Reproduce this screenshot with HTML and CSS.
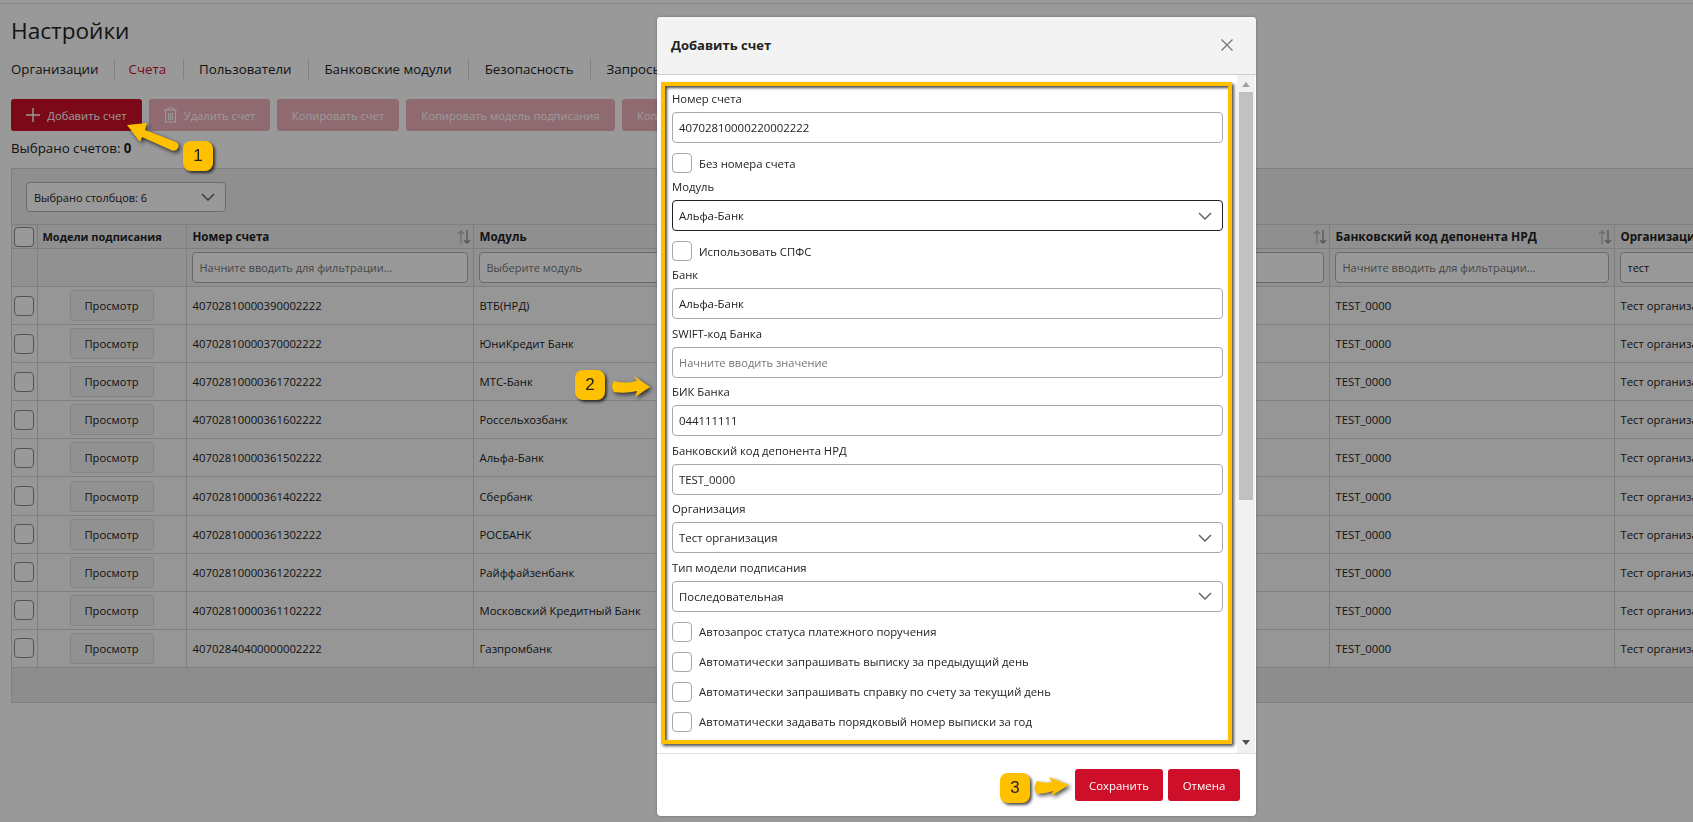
FILE: index.html
```html
<!DOCTYPE html>
<html lang="ru">

<head>
  <meta charset="UTF-8">
  <meta name="viewport" content="width=device-width, initial-scale=1.0">
  <title>Настройки</title>

  <link rel="stylesheet" href="styles.css">
</head>

<body>
  <svg class="defs" width="0" height="0">
    <symbol id="sort" viewBox="0 0 14 14">
      <path d="M4 14V1M1 4l3-3 3 3" fill="none" stroke="#b5b5b5" stroke-width="1.3" />
      <path d="M10 0v13M7 10l3 3 3-3" fill="none" stroke="#8c8c8c" stroke-width="1.3" />
    </symbol>
    <symbol id="chevron" viewBox="0 0 14 8">
      <path d="M1 1l6 6 6-6" fill="none" stroke="currentColor" stroke-width="1.5" />
    </symbol>
  </svg>

  <div class="top-line"></div>

  <main class="page">
    <h1 class="title">Настройки</h1>

    <nav class="tabs">
      <a class="tab">Организации</a>
      <a class="tab tab-active">Счета</a>
      <a class="tab">Пользователи</a>
      <a class="tab">Банковские модули</a>
      <a class="tab">Безопасность</a>
      <a class="tab">Запросы</a>
    </nav>

    <div class="actions">
      <button class="btn btn-add">
        <svg width="14" height="14" viewBox="0 0 14 14">
          <path d="M7 0v14M0 7h14" fill="none" stroke="#fff" stroke-width="1.4" />
        </svg>
        Добавить счет
      </button>
      <button class="btn btn-off btn-delete">
        <svg width="13" height="16" viewBox="0 0 13 16">
          <path d="M0 3h13M4 3V1h5v2M1.5 3v12h10V3M4.5 6v7M6.5 6v7M8.5 6v7" fill="none" stroke="#fff" stroke-width="1.1" />
        </svg>
        Удалить счет
      </button>
      <button class="btn btn-off btn-copy">Копировать счет</button>
      <button class="btn btn-off btn-copy-model">Копировать модель подписания</button>
      <button class="btn btn-off btn-more">Копировать</button>
    </div>

    <p class="selected">Выбрано счетов: <b>0</b></p>

    <section class="panel">
      <div class="panel-top">
        <div class="select select-columns">
          <span>Выбрано столбцов: 6</span>
          <svg class="chev"><use href="#chevron" /></svg>
        </div>
      </div>

      <table class="grid">
        <colgroup>
          <col class="col-check">
          <col class="col-models">
          <col class="col-number">
          <col class="col-module">
          <col class="col-bank">
          <col class="col-code">
          <col class="col-org">
        </colgroup>
        <thead>
          <tr class="head-row">
            <th><span class="check"></span></th>
            <th class="th-narrow">Модели подписания</th>
            <th>Номер счета<svg class="sort"><use href="#sort" /></svg></th>
            <th>Модуль</th>
            <th>Банк<svg class="sort"><use href="#sort" /></svg></th>
            <th class="th-wide">Банковский код депонента НРД<svg class="sort"><use href="#sort" /></svg></th>
            <th>Организация</th>
          </tr>
          <tr class="filter-row">
            <td></td>
            <td></td>
            <td><input class="filter" placeholder="Начните вводить для фильтрации..."></td>
            <td><input class="filter" placeholder="Выберите модуль"></td>
            <td><input class="filter" placeholder="Начните вводить для фильтрации..."></td>
            <td><input class="filter" placeholder="Начните вводить для фильтрации..."></td>
            <td><input class="filter" value="тест"></td>
          </tr>
        </thead>
        <tbody>
          <tr>
            <td><span class="check"></span></td>
            <td><button class="view">Просмотр</button></td>
            <td>40702810000390002222</td>
            <td>ВТБ(НРД)</td>
            <td></td>
            <td>TEST_0000</td>
            <td>Тест организация</td>
          </tr>
          <tr>
            <td><span class="check"></span></td>
            <td><button class="view">Просмотр</button></td>
            <td>40702810000370002222</td>
            <td>ЮниКредит Банк</td>
            <td></td>
            <td>TEST_0000</td>
            <td>Тест организация</td>
          </tr>
          <tr>
            <td><span class="check"></span></td>
            <td><button class="view">Просмотр</button></td>
            <td>40702810000361702222</td>
            <td>МТС-Банк</td>
            <td></td>
            <td>TEST_0000</td>
            <td>Тест организация</td>
          </tr>
          <tr>
            <td><span class="check"></span></td>
            <td><button class="view">Просмотр</button></td>
            <td>40702810000361602222</td>
            <td>Россельхозбанк</td>
            <td></td>
            <td>TEST_0000</td>
            <td>Тест организация</td>
          </tr>
          <tr>
            <td><span class="check"></span></td>
            <td><button class="view">Просмотр</button></td>
            <td>40702810000361502222</td>
            <td>Альфа-Банк</td>
            <td></td>
            <td>TEST_0000</td>
            <td>Тест организация</td>
          </tr>
          <tr>
            <td><span class="check"></span></td>
            <td><button class="view">Просмотр</button></td>
            <td>40702810000361402222</td>
            <td>Сбербанк</td>
            <td></td>
            <td>TEST_0000</td>
            <td>Тест организация</td>
          </tr>
          <tr>
            <td><span class="check"></span></td>
            <td><button class="view">Просмотр</button></td>
            <td>40702810000361302222</td>
            <td>РОСБАНК</td>
            <td></td>
            <td>TEST_0000</td>
            <td>Тест организация</td>
          </tr>
          <tr>
            <td><span class="check"></span></td>
            <td><button class="view">Просмотр</button></td>
            <td>40702810000361202222</td>
            <td>Райффайзенбанк</td>
            <td></td>
            <td>TEST_0000</td>
            <td>Тест организация</td>
          </tr>
          <tr>
            <td><span class="check"></span></td>
            <td><button class="view">Просмотр</button></td>
            <td>40702810000361102222</td>
            <td>Московский Кредитный Банк</td>
            <td></td>
            <td>TEST_0000</td>
            <td>Тест организация</td>
          </tr>
          <tr>
            <td><span class="check"></span></td>
            <td><button class="view">Просмотр</button></td>
            <td>40702840400000002222</td>
            <td>Газпромбанк</td>
            <td></td>
            <td>TEST_0000</td>
            <td>Тест организация</td>
          </tr>
        </tbody>
      </table>
      <div class="panel-bottom"></div>
    </section>
  </main>

  <div class="backdrop"></div>

  <div class="modal">
    <header class="modal-head">
      <h2 class="modal-title">Добавить счет</h2>
      <svg class="modal-close" width="12" height="12" viewBox="0 0 12 12">
        <path d="M0.5 0.5l11 11M11.5 0.5l-11 11" fill="none" stroke="#7a7a7a" stroke-width="1.4" />
      </svg>
    </header>

    <div class="modal-body">
      <form class="form">
        <label class="field-label">Номер счета</label>
        <input class="field-input" value="40702810000220002222">

        <div class="check-row check-row-first"><span class="check"></span>Без номера счета</div>

        <label class="field-label">Модуль</label>
        <div class="select select-field select-focus">
          <span>Альфа-Банк</span>
          <svg class="chev"><use href="#chevron" /></svg>
        </div>

        <div class="check-row check-row-first"><span class="check"></span>Использовать СПФС</div>

        <label class="field-label">Банк</label>
        <input class="field-input" value="Альфа-Банк">

        <label class="field-label field-label-next">SWIFT-код Банка</label>
        <input class="field-input" placeholder="Начните вводить значение">

        <label class="field-label field-label-next">БИК Банка</label>
        <input class="field-input" value="044111111">

        <label class="field-label field-label-next">Банковский код депонента НРД</label>
        <input class="field-input" value="TEST_0000">

        <label class="field-label field-label-next">Организация</label>
        <div class="select select-field">
          <span>Тест организация</span>
          <svg class="chev"><use href="#chevron" /></svg>
        </div>

        <label class="field-label field-label-next">Тип модели подписания</label>
        <div class="select select-field">
          <span>Последовательная</span>
          <svg class="chev"><use href="#chevron" /></svg>
        </div>

        <div class="check-row check-row-first"><span class="check"></span>Автозапрос статуса платежного поручения</div>
        <div class="check-row"><span class="check"></span>Автоматически запрашивать выписку за предыдущий день</div>
        <div class="check-row"><span class="check"></span>Автоматически запрашивать справку по счету за текущий день</div>
        <div class="check-row"><span class="check"></span>Автоматически задавать порядковый номер выписки за год</div>
      </form>

      <div class="scrollbar">
        <span class="scroll-up"></span>
        <span class="scroll-thumb"></span>
        <span class="scroll-down"></span>
      </div>
    </div>

    <footer class="modal-foot">
      <button class="btn btn-save">Сохранить</button>
      <button class="btn btn-cancel">Отмена</button>
    </footer>
  </div>

  <!-- annotations on top of the screenshot -->
  <div class="highlight"></div>

  <svg class="arrows" width="1693" height="822" viewBox="0 0 1693 822">
    <path d="M127 125L147 123L145 130L176 142Q180 145 178 148Q176 152 171 150L142 137L140 142Z" />
    <path d="M614 381Q625 384 637 381L634 376L650 387L635 397L637 391Q625 394 614 392Q610 386 614 381Z" />
    <path d="M1037 781Q1045 784 1052 782L1049 777L1069 785L1051 796L1053 791Q1045 794 1037 794Q1032 788 1037 781Z" />
  </svg>

  <div class="badge badge-one">1</div>
  <div class="badge badge-two">2</div>
  <div class="badge badge-three">3</div>
</body>

</html>
```

FILE: styles.css
```css
* {
  box-sizing: border-box;
}

body {
  margin: 0;
  width: 1693px;
  height: 822px;
  overflow: hidden;
  background: #fff;
  color: #222;
  font-family: "Open Sans", "Noto Sans", sans-serif;
  font-size: 12px;
}

.defs {
  display: block;
}

.top-line {
  height: 4px;
  border-bottom: 1px solid #e6e6e6;
}

.page {
  padding-left: 11px;
}

.title {
  margin: 0;
  height: 47px;
  padding-top: 9px;
  font-size: 22.6px;
  font-weight: 400;
  line-height: 36px;
}

.tabs {
  display: flex;
  align-items: center;
  height: 20px;
  margin-top: 8px;
  font-size: 13.3px;
}

.tab {
  padding: 0 16.5px 0 15.5px;
  border-right: 1px solid #d8d8d8;
  line-height: 20px;
  white-space: nowrap;
}

.tab:first-child {
  padding: 0 15px 0 0;
}

.tab-active {
  padding-left: 14px;
  color: #c8102e;
}

.actions {
  display: flex;
  gap: 7px;
  margin-top: 20px;
  height: 32px;
}

.btn {
  display: flex;
  align-items: center;
  justify-content: center;
  gap: 7px;
  height: 32px;
  padding: 0;
  border: 0;
  border-radius: 3px;
  background: #ce0f29;
  color: #fff;
  font-family: inherit;
  font-size: 11.2px;
}

.btn-add {
  width: 131px;
}

.btn-off {
  background: #efb3bc;
  color: #fff;
}

.btn-delete {
  width: 121px;
}

.btn-copy {
  width: 122px;
}

.btn-copy-model {
  width: 209px;
}

.btn-more {
  justify-content: flex-start;
  width: 122px;
  padding-left: 15px;
}

.selected {
  margin: 8px 0 0;
  height: 29px;
  font-size: 13.3px;
  line-height: 18px;
}

.panel {
  width: 1800px;
  border: 1px solid #d4d4d4;
  background: #efefef;
}

.panel-top {
  height: 55px;
  padding: 13px 14px 0;
}

.select {
  display: flex;
  align-items: center;
  justify-content: space-between;
  background: #fff;
  border: 1px solid #b4b4b4;
  border-radius: 4px;
}

.select-columns {
  width: 200px;
  height: 30px;
  padding: 0 10px 0 7px;
  font-size: 11px;
}

.chev {
  width: 14px;
  height: 8px;
  color: #666;
}

.grid {
  width: 1798px;
  border-collapse: collapse;
  table-layout: fixed;
  font-size: 11.3px;
}

.col-check {
  width: 25px;
}

.col-models {
  width: 149px;
}

.col-number {
  width: 287px;
}

.col-module {
  width: 327px;
}

.col-bank {
  width: 529px;
}

.col-code {
  width: 285px;
}

.grid th,
.grid td {
  border: 1px solid #d4d4d4;
  padding: 0 6px;
  overflow: hidden;
  white-space: nowrap;
  text-align: left;
}

.grid tr > :first-child {
  border-left: 0;
  padding: 0 0 0 2px;
}

.head-row th {
  position: relative;
  height: 24px;
  background: #efefef;
  font-size: 11.6px;
  font-weight: 700;
}

.head-row .th-narrow {
  padding-left: 5px;
  font-size: 11px;
}

.head-row .th-wide {
  font-size: 12px;
}

.filter-row td {
  height: 38px;
  padding: 0 5px;
  background: #f2f2f2;
}

.grid tbody td {
  height: 38.1px;
  background: #fbfbfb;
}

.sort {
  position: absolute;
  top: 5px;
  right: 2px;
  width: 14px;
  height: 14px;
}

.check {
  display: block;
  flex: none;
  width: 20px;
  height: 20px;
  background: #fff;
  border: 1px solid #a8a8a8;
  border-radius: 4px;
}

.grid .check {
  border-color: #8c8c8c;
}

.filter {
  display: block;
  width: 100%;
  height: 31px;
  padding: 0 7px;
  background: #fff;
  border: 1px solid #b0b0b0;
  border-radius: 4px;
  font-family: inherit;
  font-size: 11px;
  color: #222;
}

.filter::placeholder,
.field-input::placeholder {
  color: #757575;
  opacity: 1;
}

.field-input::placeholder {
  font-size: 11.1px;
}

.view {
  display: block;
  width: 84px;
  height: 31px;
  margin: 0 auto;
  padding: 0;
  background: #f2f2f2;
  border: 1px solid #ddd;
  border-radius: 3px;
  font-family: inherit;
  font-size: 11.2px;
  color: #222;
}

.panel-bottom {
  height: 34px;
  background: #ececec;
}

.backdrop {
  position: fixed;
  inset: 0;
  background: rgba(0, 0, 0, 0.4);
}

.modal {
  position: fixed;
  left: 657px;
  top: 17px;
  display: flex;
  flex-direction: column;
  width: 599px;
  height: 799px;
  background: #fff;
  border-radius: 4px;
  box-shadow: 0 0 3px rgba(0, 0, 0, 0.3);
  overflow: hidden;
}

.modal-head {
  display: flex;
  align-items: center;
  justify-content: space-between;
  flex: none;
  height: 58px;
  padding: 0 23px 2px 14px;
  background: #f3f3f3;
  border-bottom: 1px solid #cfcfcf;
}

.modal-title {
  margin: 0;
  font-size: 13px;
  font-weight: 700;
}

.modal-body {
  display: flex;
  flex: none;
  height: 678px;
  overflow: hidden;
}

.form {
  flex: 1;
  padding: 15px 14px 0 15px;
}

.field-label {
  display: block;
  height: 18px;
  margin-bottom: 4px;
  font-size: 11.3px;
  line-height: 18px;
}

.field-label-next {
  margin-top: 5.6px;
}

.field-input {
  display: block;
  width: 100%;
  height: 31px;
  padding: 0 6px;
  background: #fff;
  border: 1px solid #a8a8a8;
  border-radius: 4px;
  font-family: inherit;
  font-size: 11.4px;
  color: #222;
}

.select-field {
  width: 100%;
  height: 31px;
  padding: 0 10px 0 6px;
  border-color: #a8a8a8;
  font-size: 11.4px;
}

.select-focus {
  border-color: #222;
}

.check-row {
  display: flex;
  align-items: center;
  gap: 7px;
  height: 20px;
  margin-top: 10px;
  margin-bottom: 0;
  font-size: 11.3px;
}

.check-row-first + .field-label {
  margin-top: 5px;
}

.scrollbar {
  display: flex;
  flex-direction: column;
  align-items: center;
  flex: none;
  width: 18px;
  margin-right: 1px;
  background: #f1f1f1;
}

.scroll-up {
  width: 0;
  height: 0;
  margin-top: 7px;
  border: 4px solid transparent;
  border-top: 0;
  border-bottom: 5px solid #a0a0a0;
}

.scroll-thumb {
  width: 14px;
  height: 408px;
  margin-top: 5px;
  background: #c1c1c1;
}

.scroll-down {
  width: 0;
  height: 0;
  margin-top: auto;
  margin-bottom: 8px;
  border: 4px solid transparent;
  border-bottom: 0;
  border-top: 5px solid #505050;
}

.modal-foot {
  display: flex;
  justify-content: flex-end;
  gap: 5px;
  flex: 1;
  padding: 15px 16px 0 0;
  border-top: 1px solid #e2e2e2;
}

.btn-save {
  width: 88px;
  height: 32px;
  font-size: 11.4px;
}

.btn-cancel {
  width: 72px;
  height: 32px;
  font-size: 11.4px;
}

.highlight {
  position: fixed;
  left: 661px;
  top: 82px;
  width: 571px;
  height: 662px;
  border: 4.5px solid #ffc000;
  box-shadow: 2px 2px 3px rgba(0, 0, 0, 0.7), inset 2px 2px 3px rgba(0, 0, 0, 0.7);
}

.arrows {
  position: fixed;
  left: 0;
  top: 0;
  fill: #ffc000;
  filter: drop-shadow(2px 2px 2px rgba(0, 0, 0, 0.7));
  pointer-events: none;
}

.badge {
  position: fixed;
  display: flex;
  align-items: center;
  justify-content: center;
  width: 30px;
  height: 30px;
  background: #ffc000;
  border-radius: 8px;
  box-shadow: 2px 2px 3px rgba(0, 0, 0, 0.7);
  color: #222;
  font-family: "Liberation Sans", sans-serif;
  font-size: 17px;
}

.badge-one {
  left: 183px;
  top: 141px;
}

.badge-two {
  left: 575px;
  top: 370px;
}

.badge-three {
  left: 1000px;
  top: 773px;
}
```
